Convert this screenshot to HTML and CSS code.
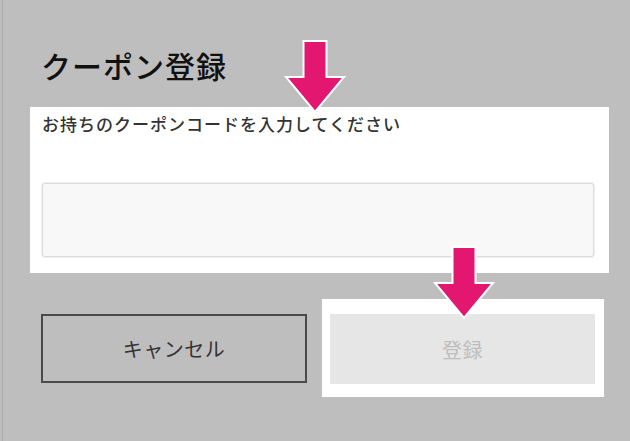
FILE: index.html
```html
<!DOCTYPE html>
<html lang="ja">
<head>
  <meta charset="UTF-8">
  <meta name="viewport" content="width=device-width, initial-scale=1.0">
  <title>クーポン登録</title>
  <link rel="stylesheet" href="styles.css">
</head>
<body>
  <div class="screen">
    <h1 class="title">クーポン登録</h1>

    <div class="panel">
      <label class="label" for="couponCode">お持ちのクーポンコードを入力してください</label>
      <input id="couponCode" class="code-input" type="text">
    </div>

    <div class="actions">
      <button class="btn btn-cancel">キャンセル</button>
      <div class="highlight">
        <button class="btn btn-submit" disabled>登録</button>
      </div>
    </div>
  </div>

  <svg class="arrow arrow-top" viewBox="0 0 64 76" width="64" height="76">
    <polygon points="20.5,1 43.5,1 43.5,37 61,37 32,72 3,37 20.5,37" />
  </svg>
  <svg class="arrow arrow-bottom" viewBox="0 0 64 76" width="64" height="76">
    <polygon points="20.5,1 43.5,1 43.5,37 61,37 32,72 3,37 20.5,37" />
  </svg>
</body>
</html>
```

FILE: styles.css
```css
html, body {
  margin: 0;
  height: 100%;
}

body {
  font-family: "Noto Sans CJK JP", "Noto Sans", sans-serif;
  background-color: #bebebe;
  position: relative;
  overflow: hidden;
}

.screen {
  margin-left: 2px;
  border-left: 1px solid #a9a9a9;
  height: 441px;
  padding-left: 27px;
  box-sizing: border-box;
}

.title {
  margin: 0;
  padding: 47px 0 0 11px;
  font-size: 30px;
  font-weight: 500;
  line-height: 36px;
  letter-spacing: 1px;
  color: #111;
}

.panel {
  margin-top: 24px;
  width: 579px;
  box-sizing: border-box;
  background-color: #fff;
  padding: 5px 15px 16px 12px;
}

.label {
  display: block;
  font-size: 17px;
  font-weight: 500;
  line-height: 24px;
  letter-spacing: 1px;
  color: #333;
}

.code-input {
  display: block;
  margin-top: 47px;
  width: 100%;
  height: 74px;
  box-sizing: border-box;
  background-color: #f8f8f8;
  border: 1px solid #dddddd;
  box-shadow: 0 0 0 1px #efefef;
  border-radius: 3px;
  outline: none;
}

.actions {
  margin-top: 41px;
  padding-left: 11px;
  display: grid;
  grid-template-columns: 266px 265px;
  gap: 23px;
}

.btn {
  font-family: inherit;
  font-size: 20px;
  letter-spacing: 0.5px;
  height: 70px;
  width: 100%;
  box-sizing: border-box;
}

.btn-cancel {
  background: transparent;
  border: 2px solid #4a4a4a;
  color: #333;
  height: 69px;
}

.highlight {
  position: relative;
}

.highlight::before {
  content: "";
  position: absolute;
  top: -15px;
  right: -9px;
  bottom: -13px;
  left: -8px;
  background-color: #fff;
}

.btn-submit {
  position: relative;
  background-color: #e6e6e6;
  border: none;
  color: #bdbdbd;
}

.arrow {
  position: absolute;
}

.arrow polygon {
  fill: #e3176f;
  stroke: #fff;
  stroke-width: 2;
}

.arrow-top {
  left: 283px;
  top: 40px;
}

.arrow-bottom {
  left: 432px;
  top: 246px;
}
```
